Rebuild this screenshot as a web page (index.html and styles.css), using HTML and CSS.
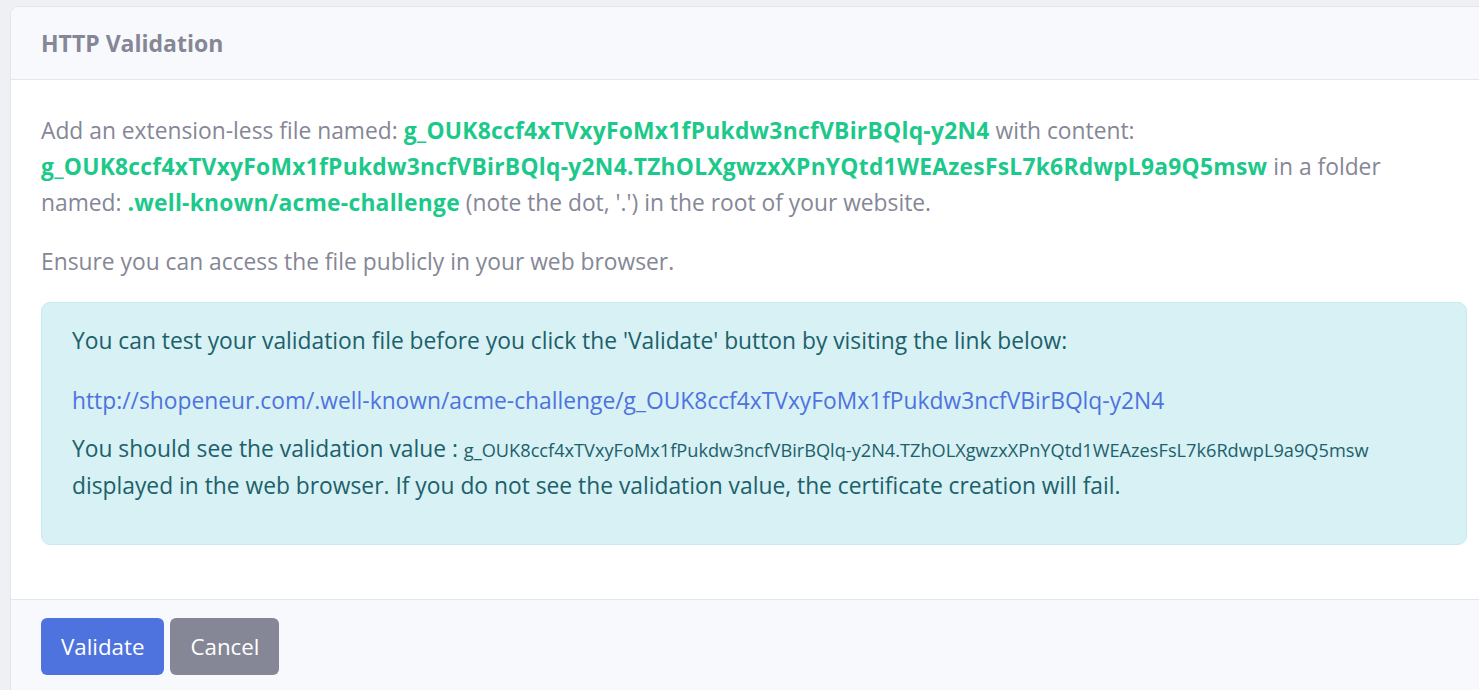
FILE: index.html
```html
<!DOCTYPE html>
<html lang="en">
<head>
<meta charset="utf-8">
<title>HTTP Validation</title>
<link rel="stylesheet" href="styles.css">
</head>
<body>
<div class="card">
  <div class="card-header">HTTP Validation</div>
  <div class="card-body">
    <p class="text">Add an extension-less file named: <span class="hl">g_OUK8ccf4xTVxyFoMx1fPukdw3ncfVBirBQlq-y2N4</span> with content: <span class="hl">g_OUK8ccf4xTVxyFoMx1fPukdw3ncfVBirBQlq-y2N4.TZhOLXgwzxXPnYQtd1WEAzesFsL7k6RdwpL9a9Q5msw</span> in a folder named: <span class="hl">.well-known/acme-challenge</span> (note the dot, '.') in the root of your website.</p>
    <p class="text">Ensure you can access the file publicly in your web browser.</p>
    <div class="alert">
      <p class="a-first">You can test your validation file before you click the 'Validate' button by visiting the link below:</p>
      <p class="a-link"><a href="#">http://shopeneur.com/.well-known/acme-challenge/g_OUK8ccf4xTVxyFoMx1fPukdw3ncfVBirBQlq-y2N4</a></p>
      <p class="a-last">You should see the validation value : <span class="small">g_OUK8ccf4xTVxyFoMx1fPukdw3ncfVBirBQlq-y2N4.TZhOLXgwzxXPnYQtd1WEAzesFsL7k6RdwpL9a9Q5msw</span> displayed in the web browser. If you do not see the validation value, the certificate creation will fail.</p>
    </div>
  </div>
  <div class="card-footer">
    <button class="btn btn-primary">Validate</button>
    <button class="btn btn-secondary">Cancel</button>
  </div>
</div>
</body>
</html>
```

FILE: styles.css
```css
html, body {
  margin: 0;
  height: 100%;
  overflow: hidden;
}
body {
  background: #eff0f3;
  padding: 6px 0 0 10px;
  box-sizing: border-box;
  font-family: "Open Sans", "Noto Sans", sans-serif;
  color: #858796;
}
.card {
  width: 1486px;
  background: #fff;
  border: 1px solid #e3e6f0;
  border-radius: 9px;
  overflow: hidden;
}
.card-header {
  background: #f8f9fc;
  border-bottom: 1px solid #e3e6f0;
  height: 72px;
  display: flex;
  align-items: center;
  padding: 0 30px;
  font-weight: 700;
  font-size: 23px;
  color: #858796;
}
.card-body {
  padding: 33px 30px 30px;
}
.text {
  margin: 0 0 23px;
  font-size: 22.8px;
  line-height: 36px;
}
.text + .text { margin-bottom: 22px; }
.hl {
  color: #1cc88a;
  font-weight: 700;
  letter-spacing: 0.26px;
}
.alert {
  background: #d7f1f5;
  border: 1px solid #c7ebf1;
  border-radius: 9px;
  color: #1c606a;
  padding: 20px 30px 16px;
  margin-bottom: 24px;
  font-size: 22.8px;
  line-height: 36px;
}
.alert p { margin: 0; }
.a-first { margin-bottom: 24px !important; }
.a-link { margin-bottom: 12px !important; }
.a-last { margin-bottom: 24px !important; }
.alert a {
  color: #4e73df;
  text-decoration: none;
}
.small {
  font-size: 18.2px;
}
.card-footer {
  background: #f8f9fc;
  border-top: 1px solid #e3e6f0;
  padding: 18px 30px 30px;
  display: flex;
  gap: 6px;
}
.btn {
  font-family: inherit;
  font-size: 22.3px;
  height: 57px;
  padding: 0 20px;
  border: none;
  border-radius: 6px;
  color: #fff;
  cursor: pointer;
}
.btn-primary { background: #4e73df; }
.btn-secondary { background: #858796; }
```
